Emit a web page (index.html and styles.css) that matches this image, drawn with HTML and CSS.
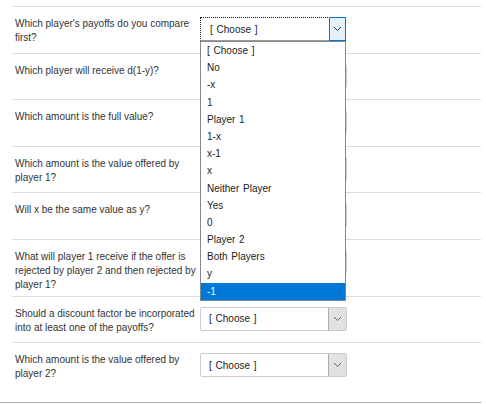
FILE: index.html
```html
<!DOCTYPE html>
<html lang="en">
<head>
    <meta charset="UTF-8">
    <title>Bargaining questions</title>
    <link rel="stylesheet" href="styles.css">
</head>
<body>
    <div class="quiz">
        <div class="row">
            <div class="label">Which player's payoffs do you compare first?</div>
            <div class="select focused">
                <span class="value">[ Choose ]</span>
                <span class="arrow">
                    <svg width="9" height="6" viewBox="0 0 9 6"><path d="M1 1 L4.5 4.5 L8 1" fill="none" stroke="#333" stroke-width="1"/></svg>
                </span>
                <ul class="dropdown">
                    <li>[ Choose ]</li>
                    <li>No</li>
                    <li>-x</li>
                    <li>1</li>
                    <li>Player 1</li>
                    <li>1-x</li>
                    <li>x-1</li>
                    <li>x</li>
                    <li>Neither Player</li>
                    <li>Yes</li>
                    <li>0</li>
                    <li>Player 2</li>
                    <li>Both Players</li>
                    <li>y</li>
                    <li class="selected">-1</li>
                </ul>
            </div>
        </div>
        <!-- these four sit under the open list, only their right edge shows -->
        <div class="row">
            <div class="label">Which player will receive d(1-y)?</div>
            <div class="select covered"><span class="arrow"></span></div>
        </div>
        <div class="row">
            <div class="label">Which amount is the full value?</div>
            <div class="select covered"><span class="arrow"></span></div>
        </div>
        <div class="row">
            <div class="label">Which amount is the value offered by player 1?</div>
            <div class="select covered"><span class="arrow"></span></div>
        </div>
        <div class="row">
            <div class="label">Will x be the same value as y?</div>
            <div class="select covered"><span class="arrow"></span></div>
        </div>
        <div class="row">
            <div class="label">What will player 1 receive if the offer is rejected by player 2 and then rejected by player 1?</div>
            <div class="select covered"><span class="arrow"></span></div>
        </div>
        <div class="row">
            <div class="label">Should a discount factor be incorporated into at least one of the payoffs?</div>
            <div class="select">
                <span class="value">[ Choose ]</span>
                <span class="arrow">
                    <svg width="9" height="6" viewBox="0 0 9 6"><path d="M1 1 L4.5 4.5 L8 1" fill="none" stroke="#666" stroke-width="1"/></svg>
                </span>
            </div>
        </div>
        <div class="row">
            <div class="label">Which amount is the value offered by player 2?</div>
            <div class="select">
                <span class="value">[ Choose ]</span>
                <span class="arrow">
                    <svg width="9" height="6" viewBox="0 0 9 6"><path d="M1 1 L4.5 4.5 L8 1" fill="none" stroke="#666" stroke-width="1"/></svg>
                </span>
            </div>
        </div>
    </div>
</body>
</html>
```

FILE: styles.css
```css
body {
    margin: 0;
    padding: 0;
    background-color: #ffffff;
    font-family: "Liberation Sans", Arial, sans-serif;
    font-size: 10px;
    color: #333;
}
.quiz {
    width: 469px;
    padding: 6px 0 13.5px 12px;
    border-bottom: 1px solid #a9a9a9;
}
.row {
    display: flex;
    align-items: flex-start;
    border-top: 1px solid #dddddd;
    padding: 8px 0 4px 3px;
}
.label {
    flex: 0 0 182px;
    line-height: 14px;
    padding-top: 2px;
}
.select {
    position: relative;
    box-sizing: border-box;
    width: 147px;
    height: 24px;
    margin: 2px 0 7.5px 3px;
    border: 1px solid #cccccc;
    border-radius: 2px;
    display: flex;
    align-items: center;
    justify-content: space-between;
}
.select.covered {
    justify-content: flex-end;
}
.select .value {
    padding-left: 8px;
    color: #222;
    word-spacing: 1px;
}
.select .arrow {
    box-sizing: border-box;
    width: 18px;
    height: 22px;
    background-color: #e1e1e1;
    border-left: 1px solid #adadad;
    display: flex;
    align-items: center;
    justify-content: center;
}
/* the open one */
.select.focused {
    width: 146px;
    border: 1px dotted #222;
    border-bottom: 1px solid #999;
    border-radius: 0;
}
.select.focused .value {
    padding-left: 9px;
}
.select.focused .arrow {
    height: 24px;
    width: 17px;
    background-color: #e5f1fb;
    border: 1px solid #0078d7;
    align-self: flex-start;
    margin-right: -1px;
    margin-top: -1px;
}
.dropdown {
    position: absolute;
    top: 23px;
    left: -1px;
    width: 146px;
    box-sizing: border-box;
    margin: 0;
    padding: 0;
    list-style-type: none;
    background-color: #ffffff;
    border: 1px solid #828790;
    z-index: 5;
}
.dropdown li {
    height: 17.2px;
    line-height: 17.2px;
    padding-left: 6px;
    color: #222;
    white-space: nowrap;
    word-spacing: 1px;
}
.dropdown li.selected {
    background-color: #0078d7;
    color: #ffffff;
}
```
